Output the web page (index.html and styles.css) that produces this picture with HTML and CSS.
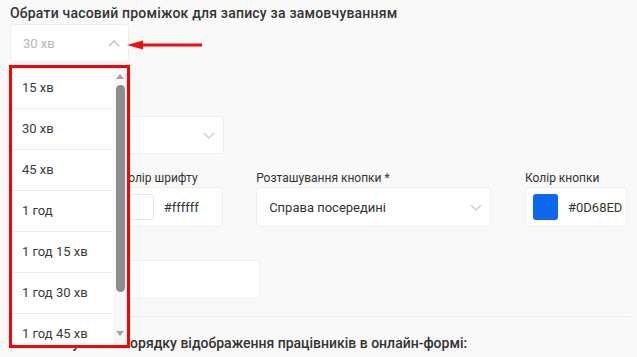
FILE: index.html
```html
<!DOCTYPE html>
<html lang="uk">
<head>
  <meta charset="UTF-8">
  <meta name="viewport" content="width=device-width, initial-scale=1.0">
  <title>Налаштування онлайн-запису</title>
  <link rel="stylesheet" href="styles.css">
</head>
<body>
  <div class="page">
    <h2 class="section-title">Обрати часовий проміжок для запису за замовчуванням</h2>

    <div class="select select-small is-open">
      <span class="select-value muted">30 хв</span>
      <svg class="chevron" width="12" height="7" viewBox="0 0 12 7"><polyline points="1,6 6,1 11,6" fill="none" stroke="#b9c0cc" stroke-width="1.3"/></svg>
    </div>

    <div class="field field-type">
      <label class="field-label">Вигляд кнопки</label>
      <div class="select select-mid">
        <span class="select-value">Кругла</span>
        <svg class="chevron" width="12" height="7" viewBox="0 0 12 7"><polyline points="1,1 6,6 11,1" fill="none" stroke="#c8ced8" stroke-width="1.3"/></svg>
      </div>
    </div>

    <div class="field-row">
      <div class="field col-bg">
        <label class="field-label">Колір фону</label>
        <div class="color-box">
          <span class="swatch swatch-white"></span>
          <span class="color-code">#fff</span>
        </div>
      </div>
      <div class="field col-font">
        <label class="field-label">Колір шрифту</label>
        <div class="color-box">
          <span class="swatch swatch-white"></span>
          <span class="color-code">#ffffff</span>
        </div>
      </div>
      <div class="field col-pos">
        <label class="field-label">Розташування кнопки *</label>
        <div class="select">
          <span class="select-value">Справа посередині</span>
          <svg class="chevron" width="12" height="7" viewBox="0 0 12 7"><polyline points="1,1 6,6 11,1" fill="none" stroke="#c8ced8" stroke-width="1.3"/></svg>
        </div>
      </div>
      <div class="field col-btn">
        <label class="field-label">Колір кнопки</label>
        <div class="color-box">
          <span class="swatch swatch-blue"></span>
          <span class="color-code">#0D68ED</span>
        </div>
      </div>
    </div>

    <div class="field field-text">
      <label class="field-label">Текст кнопки</label>
      <div class="text-input">Записатися</div>
    </div>

    <hr class="divider">

    <h2 class="section-title section-bottom">Налаштування порядку відображення працівників в онлайн-формі:</h2>
  </div>

  <!-- opened list of the first select, outlined in red -->
  <div class="dropdown">
    <ul class="dropdown-list">
      <li>15 хв</li>
      <li>30 хв</li>
      <li>45 хв</li>
      <li>1 год</li>
      <li>1 год 15 хв</li>
      <li>1 год 30 хв</li>
      <li>1 год 45 хв</li>
    </ul>
    <div class="scrollbar">
      <span class="scroll-arrow up"></span>
      <span class="scroll-thumb"></span>
      <span class="scroll-arrow down"></span>
    </div>
  </div>

  <svg class="pointer-arrow" width="78" height="14" viewBox="0 0 78 14">
    <line x1="14" y1="7" x2="76" y2="7" stroke="#f20d0d" stroke-width="3"/>
    <polygon points="1,7 17,2.5 17,11.5" fill="#f20d0d"/>
  </svg>
</body>
</html>
```

FILE: styles.css
```css
body {
  margin: 0;
  padding: 0;
  background-color: #f9f9f9;
  font-family: Roboto, "Noto Sans", Arial, sans-serif;
  color: #333;
}
.page {
  padding: 4px 10px 0 10px;
}
.section-title {
  margin: 0;
  font-size: 14px;
  font-weight: 500;
  line-height: 18px;
  letter-spacing: 0.2px;
  color: #333;
}
.section-bottom {
  margin-top: 17px;
  padding-left: 11px;
  letter-spacing: 0;
}
.select,
.color-box,
.text-input {
  display: flex;
  align-items: center;
  box-sizing: border-box;
  height: 40px;
  background-color: #fff;
  border: 1px solid #eeeeee;
  border-radius: 4px;
}
.select {
  justify-content: space-between;
  padding: 0 8px 0 12px;
  font-size: 13px;
}
.select-value.muted {
  color: #b8b8b8;
}
.select-small {
  width: 119px;
  height: 38px;
  margin-top: 2px;
}
.select-mid {
  width: 214px;
  height: 38px;
}
.field-label {
  display: block;
  font-size: 12px;
  line-height: 16px;
  margin-bottom: 1px;
  color: #333;
}
.field-type {
  margin-top: 37px;
}
.field-row {
  display: flex;
  gap: 33px;
  margin-top: 16px;
}
.col-bg { width: 78px; }
.col-font { width: 103px; }
.col-pos { width: 236px; }
.col-btn { width: 102px; margin-left: 1px; }
.color-box {
  padding: 0 7px;
  gap: 10px;
  font-size: 13px;
}
.swatch {
  display: block;
  width: 25px;
  height: 26px;
  border-radius: 3px;
  flex-shrink: 0;
}
.swatch-white {
  background-color: #fff;
  border: 1px solid #e6e6e6;
  box-sizing: border-box;
}
.swatch-blue {
  background-color: #0d68ed;
}
.color-code {
  color: #333;
}
.field-text {
  margin-top: 16px;
}
.text-input {
  width: 250px;
  height: 39px;
  padding: 0 12px;
  font-size: 13px;
}
.divider {
  border: none;
  border-top: 1px solid #ececec;
  margin: 17px 0 0 0;
  width: 620px;
}

/* dropdown overlay */
.dropdown {
  position: absolute;
  left: 9px;
  top: 65px;
  width: 121px;
  height: 283px;
  box-sizing: border-box;
  border: 3px solid #ff0000;
  background-color: #fff;
  display: flex;
  overflow: hidden;
}
.dropdown-list {
  list-style: none;
  margin: 0;
  padding: 0;
  width: 101px;
}
.dropdown-list li {
  box-sizing: border-box;
  height: 41px;
  line-height: 40px;
  padding-left: 10px;
  font-size: 13px;
  color: #3a3a3a;
  border-bottom: 1px solid #eeeeee;
}
.scrollbar {
  width: 14px;
  background-color: #f7f7f7;
  display: flex;
  flex-direction: column;
  align-items: center;
}
.scroll-arrow {
  width: 0;
  height: 0;
  border-left: 4px solid transparent;
  border-right: 4px solid transparent;
}
.scroll-arrow.up {
  margin-top: 6px;
  border-bottom: 5px solid #a3a3a3;
}
.scroll-arrow.down {
  margin-top: 39px;
  border-top: 5px solid #a3a3a3;
}
.scroll-thumb {
  margin-top: 6px;
  width: 9px;
  height: 207px;
  border-radius: 5px;
  background-color: #8c8c8c;
}
.pointer-arrow {
  position: absolute;
  left: 126px;
  top: 38px;
}
```
